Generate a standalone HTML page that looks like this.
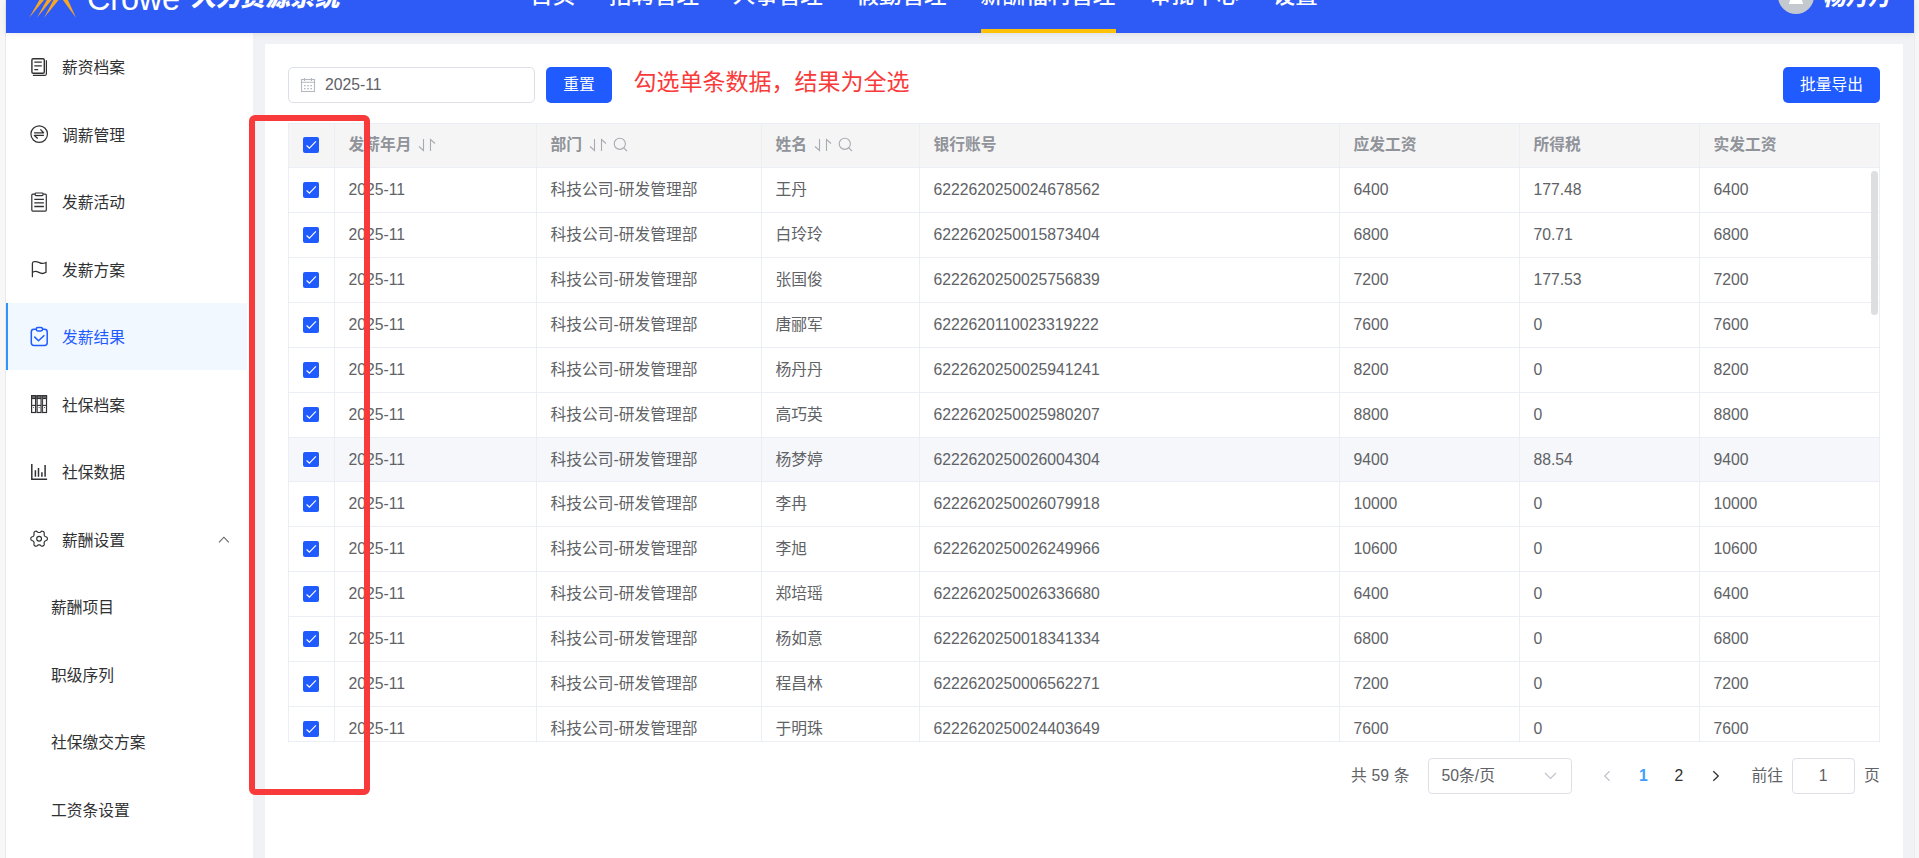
<!DOCTYPE html><html lang="zh-CN"><head><meta charset="utf-8"><title>人力资源系统</title><style>
*{box-sizing:border-box;margin:0;padding:0}
html,body{width:1919px;height:858px;overflow:hidden}
body{position:relative;background:#f0f2f5;font-family:"Liberation Sans","Noto Sans CJK SC",sans-serif;font-size:15.75px;color:#606266}
.abs{position:absolute}
#lstrip{left:0;top:0;width:6px;height:858px;background:#f7f7f7;border-right:1px solid #e9e9e9}
#rstrip{left:1914px;top:0;width:5px;height:858px;background:#f6f6f6;border-left:1px solid #ececec}
#hdr{left:6px;top:0;width:1908px;height:33px;background:#2e5bf6;box-shadow:0 1px 7px rgba(0,0,0,.09);overflow:hidden;z-index:5;color:#fff}
#hdr .t{position:absolute;white-space:nowrap;line-height:1}
#side{left:6px;top:33px;width:247px;height:825px;background:#fff;z-index:2}
.mi{position:absolute;left:0;width:247px;height:68px;line-height:68px;color:#303133;font-size:15.75px;white-space:nowrap}
.mi .tx{position:absolute;left:56px;top:0}
.mi.sub .tx{left:45px}
.mi svg{position:absolute;left:23px;top:24px;width:20px;height:20px;overflow:visible}
.mi.act{color:#1f5bff}
#main{left:265px;top:44px;width:1638px;height:814px;background:#fff;z-index:1}
#dinp{left:288px;top:67px;width:247px;height:36px;border:1px solid #dcdfe6;border-radius:5px;background:#fff;z-index:3}
#dinp .v{position:absolute;left:36px;top:0;line-height:34px;color:#606266;font-size:15.75px}
.btn{background:#1f5bff;color:#fff;border-radius:5px;text-align:center;line-height:36px;height:36px;font-size:15.75px;z-index:3}
#note{left:633.500px;top:64.500px;font-size:23px;color:#f93a3a;line-height:34px;white-space:nowrap;z-index:3}
#tbl{left:288px;top:123px;width:1592px;height:619px;overflow:hidden;z-index:3;background:#fff}
.tr{position:absolute;left:0;width:1592px}
.th{color:#909399;font-weight:bold}
.td{position:absolute;top:0;height:100%;white-space:nowrap;padding-left:13.400px}
.cb{position:absolute;width:16px;height:16px;background:#1f5bff;border-radius:2px}
.cb svg{position:absolute;left:0;top:0}
.sic{display:inline-block;vertical-align:middle;margin-left:7px;position:relative;top:-1px}
#redbox{left:249px;top:115px;width:121px;height:680px;border:6px solid #f93a3a;border-radius:6px;z-index:10}
#sbar{left:1871px;top:171px;width:7px;height:144px;border-radius:4px;background:#dddee0;z-index:6}
.pg{position:absolute;z-index:3;white-space:nowrap;line-height:35px;font-size:15.75px;color:#606266}
.pbox{border:1px solid #dcdfe6;border-radius:4px;height:35.5px;background:#fff}
</style></head><body>
<div id="lstrip" class="abs"></div><div id="rstrip" class="abs"></div>
<div id="hdr" class="abs">
<svg class="abs" style="left:0;top:0" width="100" height="33" viewBox="6 0 100 33"><g fill="#f5a623"><path d="M29.2 17.8 L45.1 -10 L52.3 -10 Z"/><path d="M36.9 17.8 L52.4 -10 L59.8 -10 Z"/><path d="M44 17.8 L58.8 -10 L66.8 -10 Z"/><path d="M76 17.8 L55.500 -10 L63.500 -10 Z"/></g></svg>
<div class="t" style="left:81px;top:-16.900px;font-size:32.5px;font-weight:400;letter-spacing:-0.2px">Crowe</div>
<div class="t" style="left:184px;top:-14.500px;font-size:24.75px;font-weight:900;transform:skewX(-13deg);transform-origin:0 100%">人力资源系统</div>
<div class="t" style="left:524.3px;top:-15px;font-size:22.5px;font-weight:500">首页</div>
<div class="t" style="left:603.05px;top:-15px;font-size:22.5px;font-weight:500">招聘管理</div>
<div class="t" style="left:726.8px;top:-15px;font-size:22.5px;font-weight:500">人事管理</div>
<div class="t" style="left:850.55px;top:-15px;font-size:22.5px;font-weight:500">假勤管理</div>
<div class="t" style="left:974.3px;top:-15px;font-size:22.5px;font-weight:500">薪酬福利管理</div>
<div class="t" style="left:1143.05px;top:-15px;font-size:22.5px;font-weight:500">审批中心</div>
<div class="t" style="left:1266.8px;top:-15px;font-size:22.5px;font-weight:500">设置</div>
<div class="abs" style="left:975px;top:29px;width:135px;height:4px;background:#ffc107"></div>
<div class="abs" style="left:1772px;top:-22px;width:36px;height:36px;border-radius:50%;background:#c4c8cf;overflow:hidden"><svg width="36" height="36" viewBox="0 0 36 36"><circle cx="18" cy="11" r="5.500" fill="#fff"/><path d="M13.200 17 L22.800 17 L25 26 L11 26 Z" fill="#fff"/></svg></div>
<div class="t" style="left:1816px;top:-13.500px;font-size:22.5px;font-weight:900;transform:skewX(-13deg);transform-origin:0 100%">杨丹丹</div>
</div>
<div id="side" class="abs">
<div class="abs" style="left:0;top:270.200px;width:241px;height:67.300px;background:#f2f8ff;border-left:2.250px solid #2e95ff"></div>
<div class="mi" style="top:1px"><span class="tx">薪资档案</span></div>
<div class="mi" style="top:69px"><span class="tx">调薪管理</span></div>
<div class="mi" style="top:136px"><span class="tx">发薪活动</span></div>
<div class="mi" style="top:204px"><span class="tx">发薪方案</span></div>
<div class="mi act" style="top:271px"><span class="tx">发薪结果</span></div>
<div class="mi" style="top:339px"><span class="tx">社保档案</span></div>
<div class="mi" style="top:406px"><span class="tx">社保数据</span></div>
<div class="mi" style="top:474px"><span class="tx">薪酬设置</span></div>
<div class="mi sub" style="top:541px"><span class="tx">薪酬项目</span></div>
<div class="mi sub" style="top:609px"><span class="tx">职级序列</span></div>
<div class="mi sub" style="top:676px"><span class="tx">社保缴交方案</span></div>
<div class="mi sub" style="top:744px"><span class="tx">工资条设置</span></div>
</div>
<svg class="abs" style="left:0;top:0;z-index:4" width="260" height="858" viewBox="0 0 260 858"><g fill="none" stroke="#303133" stroke-width="1.4"><rect x="31.9" y="58.7" width="12.4" height="14.6" rx="1.300"/><path d="M34.3 62.1H41.8M34.3 65.8H41.8M34.3 69.6H38.2" stroke-width="1.3"/><path d="M46.4 60.3V73.7a1.6 1.6 0 0 1 -1.6 1.6H32.9" stroke-width="1.2"/></g><g fill="none" stroke="#303133" stroke-width="1.2"><circle cx="39.2" cy="134.1" r="8.3"/><path d="M34.1 132.8H43.600L40.4 129.4M43.9 135.4H34.400L37.7 138.4" stroke-width="1.3" stroke-linejoin="round"/></g><g fill="none" stroke="#303133" stroke-width="1.2"><path d="M35 194.1H32.8a1 1 0 0 0 -1 1V210.1a1 1 0 0 0 1 1H45.3a1 1 0 0 0 1 -1V195.100a1 1 0 0 0 -1 -1H43.2"/><rect x="35.2" y="193" width="7.8" height="2.600" rx="0.800"/><path d="M34.3 199.300H43.9M34.3 202.900H43.9M34.3 206.500H43.9" stroke-width="1.3"/></g><g fill="none" stroke="#303133" stroke-width="1.3" stroke-linecap="round"><path d="M32.4 276.700V263.500Q32.4 261.900 34.2 261.700C38.500 261.100 39.500 263.400 42.200 263.400Q44 263.400 46 262.500V272.300Q44 273.500 42.200 273.500C39.500 273.500 38 271.200 35.300 271.400Q33.500 271.600 32.400 272.500"/></g><g fill="none" stroke="#1f5bff" stroke-width="1.5"><path d="M36 329.250H34a2.700 2.700 0 0 0 -2.700 2.700V342.750a2.700 2.700 0 0 0 2.700 2.700H44.500a2.700 2.700 0 0 0 2.700 -2.700V331.950a2.700 2.700 0 0 0 -2.700 -2.700H42.800"/><rect x="36.200" y="327.500" width="6.400" height="3.400" rx="1.700"/><path d="M34.300 336.600L38.500 340.800L44.400 335.300"/></g><g fill="none" stroke="#303133" stroke-width="1.2"><rect x="31.6" y="395.700" width="4" height="16.800"/><rect x="31.6" y="395.700" width="4" height="2.800" fill="#777"/><path d="M31.6 405.400h4" stroke-width="1.100"/><circle cx="33.6" cy="407.600" r="0.500" fill="#303133" stroke="none"/><rect x="37.1" y="395.700" width="4" height="16.800"/><rect x="37.1" y="395.700" width="4" height="2.800" fill="#777"/><path d="M37.1 405.400h4" stroke-width="1.100"/><circle cx="39.1" cy="407.600" r="0.500" fill="#303133" stroke="none"/><rect x="42.5" y="395.700" width="4" height="16.800"/><rect x="42.5" y="395.700" width="4" height="2.800" fill="#777"/><path d="M42.5 405.400h4" stroke-width="1.100"/><circle cx="44.5" cy="407.600" r="0.500" fill="#303133" stroke="none"/><path d="M41.800 396V412.500" stroke="#777" stroke-width="1"/></g><g fill="none" stroke="#303133" stroke-width="1.500"><path d="M31.800 464V479.250H47.100"/><path d="M35.400 470.300V476.700M38.500 468V476.700M41.900 472.300V476.700M45.100 465.100V476.700"/></g><g fill="none" stroke="#303133" stroke-width="1.150"><path d="M47.40 538.70 L47.32 539.42 L46.98 540.09 L46.10 540.58 L45.20 540.92 L44.76 541.34 L44.47 541.80 L44.22 542.28 L44.07 542.87 L44.23 543.83 L44.25 544.83 L43.83 545.46 L43.25 545.89 L42.59 546.18 L41.84 546.22 L40.98 545.70 L40.23 545.09 L39.64 544.92 L39.10 544.90 L38.56 544.92 L37.97 545.09 L37.22 545.70 L36.36 546.22 L35.61 546.18 L34.95 545.89 L34.37 545.46 L33.95 544.83 L33.97 543.83 L34.13 542.87 L33.98 542.28 L33.73 541.80 L33.44 541.34 L33.00 540.92 L32.10 540.58 L31.22 540.09 L30.88 539.42 L30.80 538.70 L30.88 537.98 L31.22 537.31 L32.10 536.82 L33.00 536.48 L33.44 536.06 L33.73 535.60 L33.98 535.12 L34.13 534.53 L33.97 533.57 L33.95 532.57 L34.37 531.94 L34.95 531.51 L35.61 531.22 L36.36 531.18 L37.22 531.70 L37.97 532.31 L38.56 532.48 L39.10 532.50 L39.64 532.48 L40.23 532.31 L40.98 531.70 L41.84 531.18 L42.59 531.22 L43.25 531.51 L43.83 531.94 L44.25 532.57 L44.23 533.57 L44.07 534.53 L44.22 535.12 L44.47 535.60 L44.76 536.06 L45.20 536.48 L46.10 536.82 L46.98 537.31 L47.32 537.98Z"/><circle cx="39.100" cy="538.700" r="2.400"/></g><path d="M219 542.300L223.900 537.200L228.800 542.300" fill="none" stroke="#606266" stroke-width="1.100"/></svg>
<div id="main" class="abs"></div>
<div id="dinp" class="abs"><svg class="abs" style="left:11px;top:9px" width="16" height="16" viewBox="0 0 16 16"><g fill="none" stroke="#b4b8bf" stroke-width="1.1"><rect x="1.500" y="2.500" width="13" height="12"/><path d="M1.500 5.300h13M4.500 1v3M11.500 1v3"/></g><g fill="#b4b8bf"><rect x="4" y="8" width="1.600" height="1.300"/><rect x="7.200" y="8" width="1.600" height="1.300"/><rect x="10.400" y="8" width="1.600" height="1.300"/><rect x="4" y="11" width="1.600" height="1.300"/><rect x="7.200" y="11" width="1.600" height="1.300"/><rect x="10.400" y="11" width="1.600" height="1.300"/></g></svg><span class="v">2025-11</span></div>
<div class="abs btn" style="left:546px;top:67px;width:66px">重置</div>
<div id="note" class="abs">勾选单条数据，结果为全选</div>
<div class="abs btn" style="left:1783px;top:67px;width:97px">批量导出</div>
<div id="tbl" class="abs">
<div class="abs" style="left:0;top:0;width:1592px;height:44px;background:#f5f5f5"></div>
<div class="abs" style="left:0;top:315px;width:1592px;height:43px;background:#f5f7fa"></div>
<div class="abs" style="left:0;top:0;width:1592px;height:1px;background:#ebeef5"></div>
<div class="abs" style="left:0;top:44px;width:1592px;height:1px;background:#ebeef5"></div>
<div class="abs" style="left:0;top:89px;width:1592px;height:1px;background:#ebeef5"></div>
<div class="abs" style="left:0;top:134px;width:1592px;height:1px;background:#ebeef5"></div>
<div class="abs" style="left:0;top:179px;width:1592px;height:1px;background:#ebeef5"></div>
<div class="abs" style="left:0;top:224px;width:1592px;height:1px;background:#ebeef5"></div>
<div class="abs" style="left:0;top:269px;width:1592px;height:1px;background:#ebeef5"></div>
<div class="abs" style="left:0;top:314px;width:1592px;height:1px;background:#ebeef5"></div>
<div class="abs" style="left:0;top:358px;width:1592px;height:1px;background:#ebeef5"></div>
<div class="abs" style="left:0;top:403px;width:1592px;height:1px;background:#ebeef5"></div>
<div class="abs" style="left:0;top:448px;width:1592px;height:1px;background:#ebeef5"></div>
<div class="abs" style="left:0;top:493px;width:1592px;height:1px;background:#ebeef5"></div>
<div class="abs" style="left:0;top:538px;width:1592px;height:1px;background:#ebeef5"></div>
<div class="abs" style="left:0;top:583px;width:1592px;height:1px;background:#ebeef5"></div>
<div class="abs" style="left:0;top:628px;width:1592px;height:1px;background:#ebeef5"></div>
<div class="abs" style="left:0;top:618px;width:1592px;height:1px;background:#ebeef5"></div>
<div class="abs" style="left:0px;top:0;width:1px;height:619px;background:#ebeef5"></div>
<div class="abs" style="left:46px;top:0;width:1px;height:619px;background:#ebeef5"></div>
<div class="abs" style="left:248px;top:0;width:1px;height:619px;background:#ebeef5"></div>
<div class="abs" style="left:473px;top:0;width:1px;height:619px;background:#ebeef5"></div>
<div class="abs" style="left:631px;top:0;width:1px;height:619px;background:#ebeef5"></div>
<div class="abs" style="left:1051px;top:0;width:1px;height:619px;background:#ebeef5"></div>
<div class="abs" style="left:1231px;top:0;width:1px;height:619px;background:#ebeef5"></div>
<div class="abs" style="left:1411px;top:0;width:1px;height:619px;background:#ebeef5"></div>
<div class="abs" style="left:1591px;top:0;width:1px;height:619px;background:#ebeef5"></div>
<div class="tr th" style="top:0px;height:43px;line-height:43px"><div class="td" style="left:47px">发薪年月<svg class="sic" width="19" height="14" viewBox="0 0 19 14"><path d="M5.5 1 V12.5 L1 8.5 M12.5 13 V1.5 L17 5.5" fill="none" stroke="#a8abb2" stroke-width="1.1"/></svg></div><div class="td" style="left:249px">部门<svg class="sic" width="19" height="14" viewBox="0 0 19 14"><path d="M5.5 1 V12.5 L1 8.5 M12.5 13 V1.5 L17 5.5" fill="none" stroke="#a8abb2" stroke-width="1.1"/></svg><svg class="sic" style="margin-left:5px" width="15" height="15" viewBox="0 0 15 15"><circle cx="6.8" cy="6.8" r="5.6" fill="none" stroke="#a8abb2" stroke-width="1.1"/><path d="M10.8 10.8 L14 14" stroke="#a8abb2" stroke-width="1.1"/></svg></div><div class="td" style="left:474px">姓名<svg class="sic" width="19" height="14" viewBox="0 0 19 14"><path d="M5.5 1 V12.5 L1 8.5 M12.5 13 V1.5 L17 5.5" fill="none" stroke="#a8abb2" stroke-width="1.1"/></svg><svg class="sic" style="margin-left:5px" width="15" height="15" viewBox="0 0 15 15"><circle cx="6.8" cy="6.8" r="5.6" fill="none" stroke="#a8abb2" stroke-width="1.1"/><path d="M10.8 10.8 L14 14" stroke="#a8abb2" stroke-width="1.1"/></svg></div><div class="td" style="left:632px">银行账号</div><div class="td" style="left:1052px">应发工资</div><div class="td" style="left:1232px">所得税</div><div class="td" style="left:1412px">实发工资</div></div>
<div class="tr " style="top:45px;height:44px;line-height:44px"><div class="td" style="left:47px">2025-11</div><div class="td" style="left:249px">科技公司-研发管理部</div><div class="td" style="left:474px">王丹</div><div class="td" style="left:632px">6222620250024678562</div><div class="td" style="left:1052px">6400</div><div class="td" style="left:1232px">177.48</div><div class="td" style="left:1412px">6400</div></div>
<div class="tr " style="top:90px;height:44px;line-height:44px"><div class="td" style="left:47px">2025-11</div><div class="td" style="left:249px">科技公司-研发管理部</div><div class="td" style="left:474px">白玲玲</div><div class="td" style="left:632px">6222620250015873404</div><div class="td" style="left:1052px">6800</div><div class="td" style="left:1232px">70.71</div><div class="td" style="left:1412px">6800</div></div>
<div class="tr " style="top:135px;height:44px;line-height:44px"><div class="td" style="left:47px">2025-11</div><div class="td" style="left:249px">科技公司-研发管理部</div><div class="td" style="left:474px">张国俊</div><div class="td" style="left:632px">6222620250025756839</div><div class="td" style="left:1052px">7200</div><div class="td" style="left:1232px">177.53</div><div class="td" style="left:1412px">7200</div></div>
<div class="tr " style="top:180px;height:44px;line-height:44px"><div class="td" style="left:47px">2025-11</div><div class="td" style="left:249px">科技公司-研发管理部</div><div class="td" style="left:474px">唐郦军</div><div class="td" style="left:632px">6222620110023319222</div><div class="td" style="left:1052px">7600</div><div class="td" style="left:1232px">0</div><div class="td" style="left:1412px">7600</div></div>
<div class="tr " style="top:225px;height:44px;line-height:44px"><div class="td" style="left:47px">2025-11</div><div class="td" style="left:249px">科技公司-研发管理部</div><div class="td" style="left:474px">杨丹丹</div><div class="td" style="left:632px">6222620250025941241</div><div class="td" style="left:1052px">8200</div><div class="td" style="left:1232px">0</div><div class="td" style="left:1412px">8200</div></div>
<div class="tr " style="top:270px;height:44px;line-height:44px"><div class="td" style="left:47px">2025-11</div><div class="td" style="left:249px">科技公司-研发管理部</div><div class="td" style="left:474px">高巧英</div><div class="td" style="left:632px">6222620250025980207</div><div class="td" style="left:1052px">8800</div><div class="td" style="left:1232px">0</div><div class="td" style="left:1412px">8800</div></div>
<div class="tr " style="top:315px;height:43px;line-height:43px"><div class="td" style="left:47px">2025-11</div><div class="td" style="left:249px">科技公司-研发管理部</div><div class="td" style="left:474px">杨梦婷</div><div class="td" style="left:632px">6222620250026004304</div><div class="td" style="left:1052px">9400</div><div class="td" style="left:1232px">88.54</div><div class="td" style="left:1412px">9400</div></div>
<div class="tr " style="top:359px;height:44px;line-height:44px"><div class="td" style="left:47px">2025-11</div><div class="td" style="left:249px">科技公司-研发管理部</div><div class="td" style="left:474px">李冉</div><div class="td" style="left:632px">6222620250026079918</div><div class="td" style="left:1052px">10000</div><div class="td" style="left:1232px">0</div><div class="td" style="left:1412px">10000</div></div>
<div class="tr " style="top:404px;height:44px;line-height:44px"><div class="td" style="left:47px">2025-11</div><div class="td" style="left:249px">科技公司-研发管理部</div><div class="td" style="left:474px">李旭</div><div class="td" style="left:632px">6222620250026249966</div><div class="td" style="left:1052px">10600</div><div class="td" style="left:1232px">0</div><div class="td" style="left:1412px">10600</div></div>
<div class="tr " style="top:449px;height:44px;line-height:44px"><div class="td" style="left:47px">2025-11</div><div class="td" style="left:249px">科技公司-研发管理部</div><div class="td" style="left:474px">郑培瑶</div><div class="td" style="left:632px">6222620250026336680</div><div class="td" style="left:1052px">6400</div><div class="td" style="left:1232px">0</div><div class="td" style="left:1412px">6400</div></div>
<div class="tr " style="top:494px;height:44px;line-height:44px"><div class="td" style="left:47px">2025-11</div><div class="td" style="left:249px">科技公司-研发管理部</div><div class="td" style="left:474px">杨如意</div><div class="td" style="left:632px">6222620250018341334</div><div class="td" style="left:1052px">6800</div><div class="td" style="left:1232px">0</div><div class="td" style="left:1412px">6800</div></div>
<div class="tr " style="top:539px;height:44px;line-height:44px"><div class="td" style="left:47px">2025-11</div><div class="td" style="left:249px">科技公司-研发管理部</div><div class="td" style="left:474px">程昌林</div><div class="td" style="left:632px">6222620250006562271</div><div class="td" style="left:1052px">7200</div><div class="td" style="left:1232px">0</div><div class="td" style="left:1412px">7200</div></div>
<div class="tr " style="top:584px;height:44px;line-height:44px"><div class="td" style="left:47px">2025-11</div><div class="td" style="left:249px">科技公司-研发管理部</div><div class="td" style="left:474px">于明珠</div><div class="td" style="left:632px">6222620250024403649</div><div class="td" style="left:1052px">7600</div><div class="td" style="left:1232px">0</div><div class="td" style="left:1412px">7600</div></div>
<div class="cb" style="left:15px;top:14px;height:16px"><svg width="16" height="16" viewBox="0 0 16 16"><path d="M3.600 8.500 L6.400 11.100 L12.900 4.400" fill="none" stroke="#fff" stroke-width="1.150"/></svg></div>
<div class="cb" style="left:15px;top:59px;height:16px"><svg width="16" height="16" viewBox="0 0 16 16"><path d="M3.600 8.500 L6.400 11.100 L12.900 4.400" fill="none" stroke="#fff" stroke-width="1.150"/></svg></div>
<div class="cb" style="left:15px;top:104px;height:16px"><svg width="16" height="16" viewBox="0 0 16 16"><path d="M3.600 8.500 L6.400 11.100 L12.900 4.400" fill="none" stroke="#fff" stroke-width="1.150"/></svg></div>
<div class="cb" style="left:15px;top:149px;height:16px"><svg width="16" height="16" viewBox="0 0 16 16"><path d="M3.600 8.500 L6.400 11.100 L12.900 4.400" fill="none" stroke="#fff" stroke-width="1.150"/></svg></div>
<div class="cb" style="left:15px;top:194px;height:16px"><svg width="16" height="16" viewBox="0 0 16 16"><path d="M3.600 8.500 L6.400 11.100 L12.900 4.400" fill="none" stroke="#fff" stroke-width="1.150"/></svg></div>
<div class="cb" style="left:15px;top:239px;height:16px"><svg width="16" height="16" viewBox="0 0 16 16"><path d="M3.600 8.500 L6.400 11.100 L12.900 4.400" fill="none" stroke="#fff" stroke-width="1.150"/></svg></div>
<div class="cb" style="left:15px;top:284px;height:15px"><svg width="16" height="16" viewBox="0 0 16 16"><path d="M3.600 8.500 L6.400 11.100 L12.900 4.400" fill="none" stroke="#fff" stroke-width="1.150"/></svg></div>
<div class="cb" style="left:15px;top:329px;height:15px;box-shadow:0 0 0 1px #fff"><svg width="16" height="16" viewBox="0 0 16 16"><path d="M3.600 8.500 L6.400 11.100 L12.900 4.400" fill="none" stroke="#fff" stroke-width="1.150"/></svg></div>
<div class="cb" style="left:15px;top:373px;height:16px"><svg width="16" height="16" viewBox="0 0 16 16"><path d="M3.600 8.500 L6.400 11.100 L12.900 4.400" fill="none" stroke="#fff" stroke-width="1.150"/></svg></div>
<div class="cb" style="left:15px;top:418px;height:16px"><svg width="16" height="16" viewBox="0 0 16 16"><path d="M3.600 8.500 L6.400 11.100 L12.900 4.400" fill="none" stroke="#fff" stroke-width="1.150"/></svg></div>
<div class="cb" style="left:15px;top:463px;height:16px"><svg width="16" height="16" viewBox="0 0 16 16"><path d="M3.600 8.500 L6.400 11.100 L12.900 4.400" fill="none" stroke="#fff" stroke-width="1.150"/></svg></div>
<div class="cb" style="left:15px;top:508px;height:16px"><svg width="16" height="16" viewBox="0 0 16 16"><path d="M3.600 8.500 L6.400 11.100 L12.900 4.400" fill="none" stroke="#fff" stroke-width="1.150"/></svg></div>
<div class="cb" style="left:15px;top:553px;height:16px"><svg width="16" height="16" viewBox="0 0 16 16"><path d="M3.600 8.500 L6.400 11.100 L12.900 4.400" fill="none" stroke="#fff" stroke-width="1.150"/></svg></div>
<div class="cb" style="left:15px;top:598px;height:16px"><svg width="16" height="16" viewBox="0 0 16 16"><path d="M3.600 8.500 L6.400 11.100 L12.900 4.400" fill="none" stroke="#fff" stroke-width="1.150"/></svg></div>
</div>
<div id="sbar" class="abs"></div>
<div id="redbox" class="abs"></div>
<div class="pg" style="left:1351px;top:758px;word-spacing:0.400px">共 59 条</div>
<div class="pg pbox" style="left:1428px;top:758px;width:143.5px"><span style="position:absolute;left:12.500px;top:-1px;line-height:35px">50条/页</span><svg class="abs" style="left:115px;top:13px" width="13" height="8" viewBox="0 0 13 8"><path d="M1 1 L6.500 6.500 L12 1" fill="none" stroke="#c0c4cc" stroke-width="1.200"/></svg></div>
<svg class="abs" style="left:1590px;top:760px;z-index:3" width="140" height="32" viewBox="1590 760 140 32"><path d="M1609.600 771.200 L1604.700 776 L1609.600 780.800" fill="none" stroke="#c0c4cc" stroke-width="1.250"/><path d="M1713.300 771.200 L1718.300 776 L1713.300 780.800" fill="none" stroke="#303133" stroke-width="1.300"/></svg>
<div class="pg" style="left:1633.500px;top:758px;width:20px;text-align:center;color:#409eff;font-weight:bold">1</div>
<div class="pg" style="left:1669px;top:758px;width:20px;text-align:center;color:#303133">2</div>
<div class="pg" style="left:1751.500px;top:758px">前往</div>
<div class="pg pbox" style="left:1792px;top:758px;width:62.500px;text-align:center"><span style="position:relative;top:-1px">1</span></div>
<div class="pg" style="left:1864px;top:758px">页</div>
</body></html>
